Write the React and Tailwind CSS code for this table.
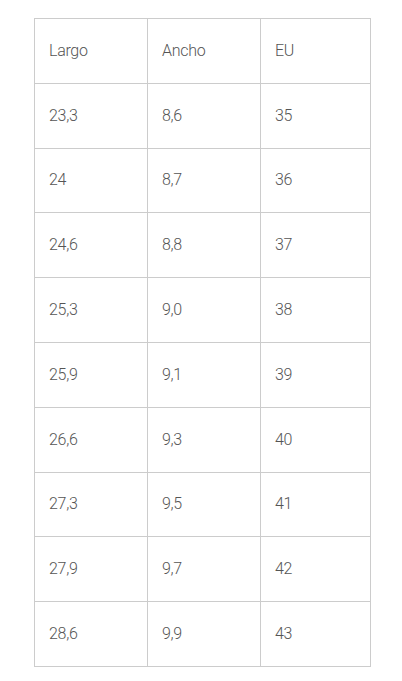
import React from 'react';

const rows = [
  ['Largo', 'Ancho', 'EU'],
  ['23,3', '8,6', '35'],
  ['24', '8,7', '36'],
  ['24,6', '8,8', '37'],
  ['25,3', '9,0', '38'],
  ['25,9', '9,1', '39'],
  ['26,6', '9,3', '40'],
  ['27,3', '9,5', '41'],
  ['27,9', '9,7', '42'],
  ['28,6', '9,9', '43'],
];

export default function App() {
  return (
    <div className="min-h-[681px] bg-white pt-[18px] pl-[34px]" style={{ fontFamily: 'Roboto, "Noto Sans", sans-serif' }}>
      <div className="grid w-[337px] grid-cols-[113px_113px_110px] border-l border-t border-[#cccccc]">
        {rows.map((row, i) =>
          row.map((cell, j) => (
            <div
              key={`${i}-${j}`}
              className="flex h-[64.8px] items-center border-b border-r border-[#cccccc] pl-[14px] text-[16px] font-light tracking-[-0.3px] text-[#555555]"
            >
              {cell}
            </div>
          ))
        )}
      </div>
    </div>
  );
}
